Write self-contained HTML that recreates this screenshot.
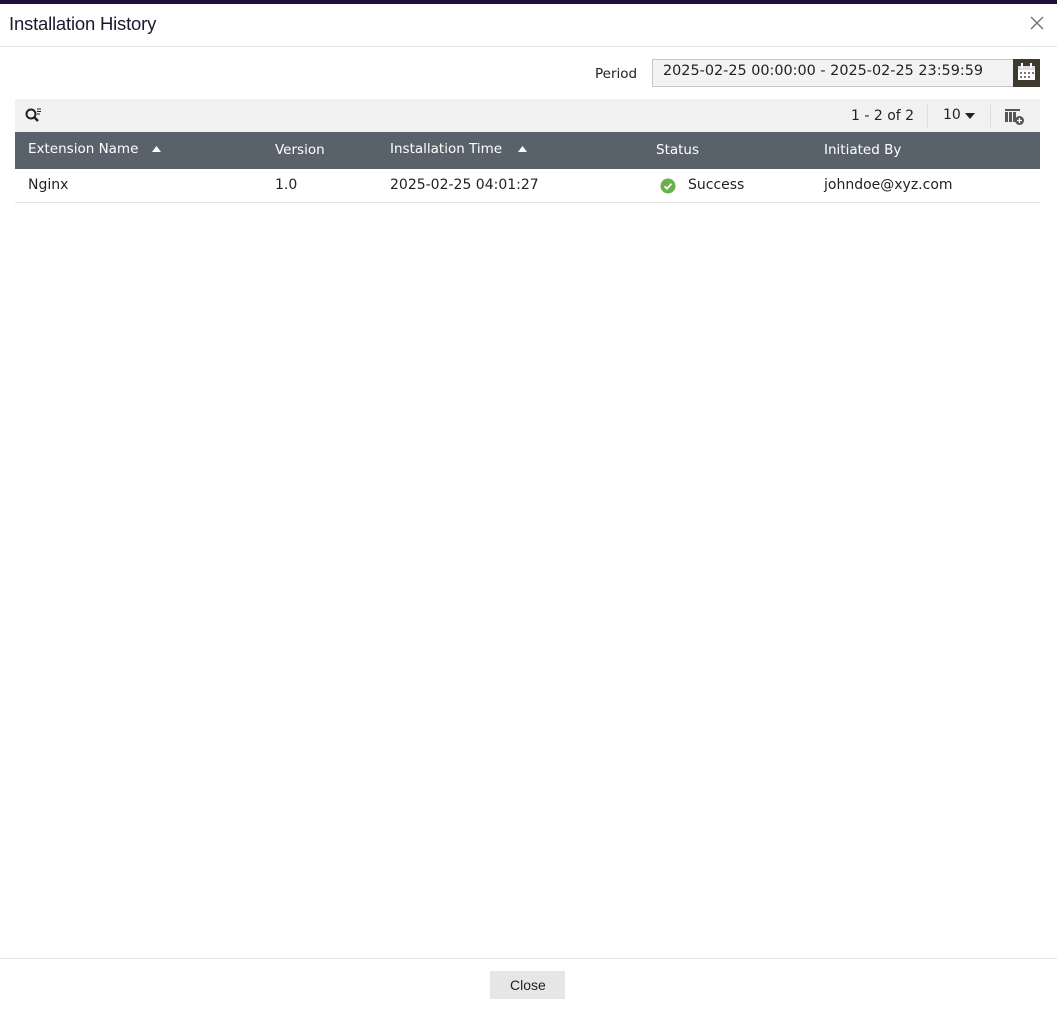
<!DOCTYPE html>
<html><head><style>
body{margin:0;width:1057px;height:1010px;background:#fff;font-family:"DejaVu Sans","Liberation Sans",sans-serif;position:relative;overflow:hidden;color:#222}
.a{position:absolute}
.topbar{left:0;top:0;width:1057px;height:4px;background:#1f0f3c}
.title{left:9px;top:13px;font-size:18.5px;color:#1a1a2e;font-family:"Liberation Sans",sans-serif;letter-spacing:-0.2px}
.hl{left:0;top:46px;width:1057px;height:1px;background:#e2e2e2}
.t{font-size:13.5px;white-space:nowrap}
.d{font-size:14px}
</style></head><body>
<div class="a topbar"></div>
<div class="a title">Installation History</div>
<svg class="a" style="left:1030px;top:16px" width="14" height="14"><path d="M1 1L13 13M13 1L1 13" stroke="#777" stroke-width="1.5"/></svg>
<div class="a hl"></div>
<div class="a t" style="left:595px;top:66px;font-size:13.5px">Period</div>
<div class="a" style="left:652px;top:59px;width:360px;height:26px;border:1px solid #c8c8c8;background:#f3f3f3"></div>
<div class="a t" style="left:663px;top:63px;font-size:14.4px">2025-02-25 00:00:00 - 2025-02-25 23:59:59</div>
<div class="a" style="left:1013px;top:59px;width:27px;height:28px;background:#3e3a30"></div>
<svg class="a" style="left:1016px;top:62px" width="21" height="21"><rect x="2" y="4" width="17" height="14" fill="#fff"/><rect x="2" y="4" width="17" height="4" fill="#ddd"/><rect x="5" y="1" width="2" height="5" fill="#fff"/><rect x="14" y="1" width="2" height="5" fill="#fff"/><g fill="#777"><rect x="4" y="10" width="2" height="2"/><rect x="8" y="10" width="2" height="2"/><rect x="12" y="10" width="2" height="2"/><rect x="16" y="10" width="2" height="2"/><rect x="4" y="14" width="2" height="2"/><rect x="8" y="14" width="2" height="2"/><rect x="12" y="14" width="2" height="2"/></g></svg>
<div class="a" style="left:15px;top:99px;width:1025px;height:33px;background:#f1f1f1"></div>
<svg class="a" style="left:24px;top:107px" width="18" height="17"><circle cx="7" cy="7" r="4.5" fill="none" stroke="#222" stroke-width="2"/><path d="M10 10L14 14" stroke="#222" stroke-width="2.5"/><path d="M13 2h4M13 4.5h4M13 7h3" stroke="#222" stroke-width="1"/></svg>
<div class="a t d" style="left:851px;top:108px">1 - 2 of 2</div>
<div class="a" style="left:927px;top:105px;width:1px;height:22px;background:#ddd"></div>
<div class="a t d" style="left:943px;top:107px">10</div>
<svg class="a" style="left:965px;top:113px" width="10" height="6"><path d="M0 0h10L5 6z" fill="#222"/></svg>
<div class="a" style="left:990px;top:105px;width:1px;height:22px;background:#ddd"></div>
<svg class="a" style="left:1004px;top:108px" width="22" height="18"><rect x="1" y="1" width="15" height="2" fill="#555"/><g fill="#555"><rect x="1" y="4" width="3" height="10"/><rect x="5" y="4" width="3" height="10"/><rect x="9" y="4" width="3" height="10"/></g><circle cx="15.5" cy="12.5" r="4.5" fill="#555"/><path d="M15.5 10v5M13 12.5h5" stroke="#fff" stroke-width="1.3"/></svg>
<div class="a" style="left:15px;top:132px;width:1025px;height:37px;background:#59626a"></div>
<div class="a t" style="left:28px;top:141px;color:#fff">Extension Name</div>
<svg class="a" style="left:152px;top:146px" width="9" height="6"><path d="M0 6h9L4.5 0z" fill="#fff"/></svg>
<div class="a t" style="left:275px;top:142px;color:#fff">Version</div>
<div class="a t" style="left:390px;top:141px;color:#fff">Installation Time</div>
<svg class="a" style="left:518px;top:146px" width="9" height="6"><path d="M0 6h9L4.5 0z" fill="#fff"/></svg>
<div class="a t" style="left:656px;top:142px;color:#fff">Status</div>
<div class="a t" style="left:824px;top:142px;color:#fff">Initiated By</div>
<div class="a t d" style="left:28px;top:177px">Nginx</div>
<div class="a t d" style="left:275px;top:177px">1.0</div>
<div class="a t d" style="left:390px;top:177px">2025-02-25 04:01:27</div>
<svg class="a" style="left:660px;top:178px" width="16" height="16"><circle cx="8" cy="8" r="7.5" fill="#6ab04c"/><path d="M4.5 8.2l2.5 2.5 4.5-5" stroke="#fff" stroke-width="1.8" fill="none"/></svg>
<div class="a t d" style="left:688px;top:177px">Success</div>
<div class="a t d" style="left:824px;top:177px">johndoe@xyz.com</div>
<div class="a" style="left:15px;top:202px;width:1025px;height:1px;background:#e4e4e4"></div>
<div class="a" style="left:0;top:958px;width:1057px;height:1px;background:#e2e2e2"></div>
<div class="a" style="left:490px;top:971px;width:75px;height:28px;background:#e6e6e6"></div>
<div class="a t" style="left:510px;top:977px;font-size:14px;font-family:'Liberation Sans',sans-serif">Close</div>
</body></html>
